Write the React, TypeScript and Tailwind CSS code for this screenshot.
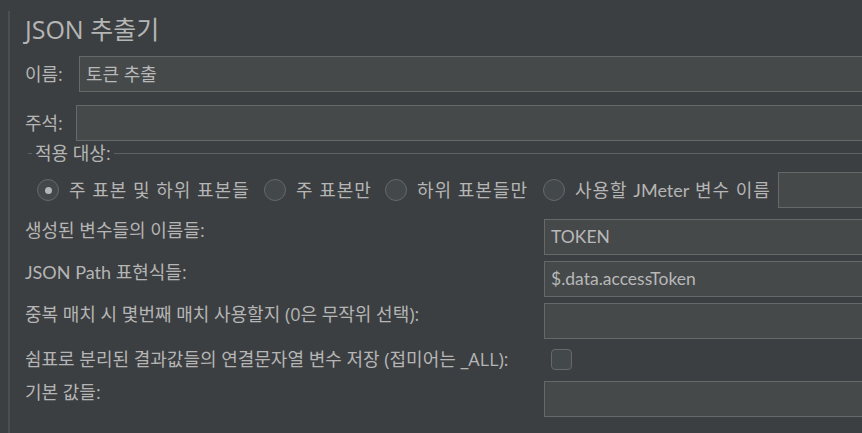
import React from 'react';

const FONT = { fontFamily: '"Open Sans", "Noto Sans CJK KR", sans-serif' };
const LATIN = { fontFamily: 'Lato, "Noto Sans CJK KR", sans-serif' };

function Field({ value, latin, className = '' }: { value?: string; latin?: boolean; className?: string }) {
  return (
    <div
      className={`h-[36px] flex-1 flex items-center border border-[#666869] bg-[#45494a] pl-[6px] text-[#b8b8b8] ${latin ? 'text-[17.5px]' : 'text-[18px]'} ${className}`}
      style={latin ? LATIN : undefined}
    >
      {value}
    </div>
  );
}

function Radio({ checked, label, width }: { checked?: boolean; label: React.ReactNode; width: string }) {
  return (
    <div className={`flex items-center gap-[10px] ${width}`}>
      <span className="flex size-[22px] shrink-0 items-center justify-center rounded-full border border-[#666869] bg-[#43494a]">
        {checked && <span className="size-[7px] rounded-full bg-[#b4b4b4]" />}
      </span>
      <span className="whitespace-nowrap tracking-[1px]">{label}</span>
    </div>
  );
}

function Row({ label, children, className = '' }: { label: React.ReactNode; children: React.ReactNode; className?: string }) {
  return (
    <div className={`flex items-start ${className}`}>
      <span className="w-[519px] shrink-0 whitespace-nowrap leading-[22px]">{label}</span>
      {children}
    </div>
  );
}

export default function App() {
  return (
    <div className="w-[862px] h-[433px] overflow-hidden bg-[#3c3f41] pl-[8px] text-[18px] text-[#b5b5b5]" style={FONT}>
      <div className="h-full w-[960px] border-l-2 border-[#4b4f51] pl-[15px]">
        {/* Title */}
        <div className="mt-[11px] h-[36px] text-[25px] leading-[36px]">JSON 추출기</div>

        {/* Name */}
        <div className="mt-[9px] flex items-center">
          <span className="w-[54px] shrink-0">이름:</span>
          <Field value="토큰 추출" />
        </div>

        {/* Comment */}
        <div className="mt-[13px] flex items-center">
          <span className="w-[51px] shrink-0">주석:</span>
          <Field />
        </div>

        {/* Apply to group */}
        <div className="flex h-[24px] items-center">
          <span className="ml-[3px] h-px w-[4px] bg-[#5d6163]" />
          <span className="px-[3px] leading-[24px]">적용 대상:</span>
          <span className="h-px flex-1 bg-[#5d6163]" />
        </div>
        <div className="mt-[7px] flex h-[36px] items-center pl-[12px]">
          <Radio checked width="w-[227px]" label="주 표본 및 하위 표본들" />
          <Radio width="w-[121px]" label="주 표본만" />
          <Radio width="w-[158px]" label="하위 표본들만" />
          <Radio
            width="w-[235px]"
            label={
              <>
                사용할 <span className="tracking-normal" style={LATIN}>JMeter</span> 변수 이름
              </>
            }
          />
          <Field />
        </div>

        {/* Settings */}
        <Row label="생성된 변수들의 이름들:" className="mt-[11px]">
          <Field value="TOKEN" latin />
        </Row>
        <Row
          label={
            <>
              <span style={LATIN}>JSON Path</span> 표현식들:
            </>
          }
          className="mt-[6px]"
        >
          <Field value="$.data.accessToken" latin />
        </Row>
        <Row label="중복 매치 시 몇번째 매치 사용할지 (0은 무작위 선택):" className="mt-[6px]">
          <Field />
        </Row>
        <div className="mt-[6px] flex h-[28px] items-center">
          <span className="w-[526px] shrink-0 whitespace-nowrap">쉼표로 분리된 결과값들의 연결문자열 변수 저장 (접미어는 _ALL):</span>
          <span className="size-[21px] rounded-[4px] border border-[#666869] bg-[#43494a]" />
        </div>
        <Row label="기본 값들:" className="mt-[8px]">
          <Field />
        </Row>
      </div>
    </div>
  );
}
